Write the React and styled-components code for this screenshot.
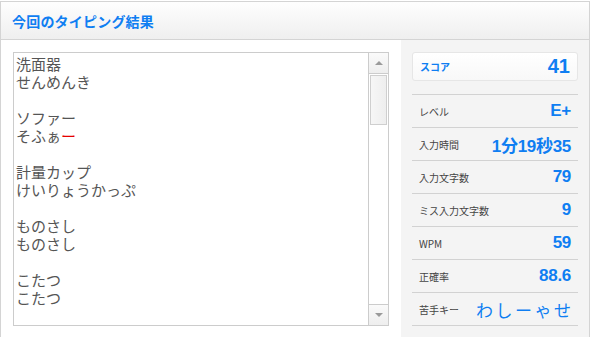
import React from "react"
import styled, { createGlobalStyle } from "styled-components"

const JP = `"Noto Sans CJK JP", "Liberation Sans", sans-serif`
const NUM = `"Liberation Sans", "Noto Sans CJK JP", sans-serif`
const BLUE = "#0f7ef2"

const stats = [
    { label: "レベル", value: "E+" },
    { label: "入力時間", value: "1分19秒35" },
    { label: "入力文字数", value: "79" },
    { label: "ミス入力文字数", value: "9" },
    { label: "WPM", value: "59" },
    { label: "正確率", value: "88.6" },
]

export default function App() {
    const words = [
        ["洗面器", "せんめんき"],
        ["ソファー", <>そふぁ<Miss>ー</Miss></>],
        ["計量カップ", "けいりょうかっぷ"],
        ["ものさし", "ものさし"],
        ["こたつ", "こたつ"],
    ]

    return <>
        <GlobalStyle />
        <Panel>
            <Header>
                <Title>今回のタイピング結果</Title>
            </Header>
            <Body>
                <TextBox>
                    <TextContent>
                        {words.map((w, i) => (
                            <Word key={i}>
                                <Line>{w[0]}</Line>
                                <Line>{w[1]}</Line>
                            </Word>
                        ))}
                    </TextContent>
                    <ScrollBar>
                        <ScrollButton><Arrow $up /></ScrollButton>
                        <Track><Thumb /></Track>
                        <ScrollButton $bottom><Arrow /></ScrollButton>
                    </ScrollBar>
                </TextBox>
                <Side>
                    <ScoreBox>
                        <ScoreLabel>スコア</ScoreLabel>
                        <ScoreValue>41</ScoreValue>
                    </ScoreBox>
                    <StatList>
                        {stats.map(s => (
                            <StatRow key={s.label}>
                                <StatLabel>{s.label}</StatLabel>
                                <StatValue>{s.value}</StatValue>
                            </StatRow>
                        ))}
                        <StatRow>
                            <StatLabel>苦手キー</StatLabel>
                            <WeakKeys>わしーゃせ</WeakKeys>
                        </StatRow>
                    </StatList>
                </Side>
            </Body>
        </Panel>
    </>
}

const GlobalStyle = createGlobalStyle`
    body {
        margin: 0;
        background: #fff;
        font-family: ${JP};
        overflow: hidden;
    }
`

const Panel = styled.div`
    margin-top: 1px;
    width: 590px;
    height: 336px;
    box-sizing: border-box;
    border: 1px solid #d4d4d4;
    border-bottom: none;
    display: flex;
    flex-direction: column;
`

const Header = styled.div`
    height: 37px;
    flex-shrink: 0;
    border-bottom: 1px solid #d4d4d4;
    background: linear-gradient(#fefefe, #efefef);
    display: flex;
    align-items: center;
    padding-left: 11px;
`

const Title = styled.h1`
    margin: 0;
    font-size: 14px;
    font-weight: bold;
    color: ${BLUE};
    letter-spacing: 0.2px;
`

const Body = styled.div`
    display: flex;
    flex: 1;
    padding-left: 12px;
    gap: 12px;
`

const TextBox = styled.div`
    margin-top: 12px;
    width: 376px;
    height: 274px;
    box-sizing: border-box;
    border: 1px solid #cccccc;
    display: flex;
    background: #fff;
`

const TextContent = styled.div`
    flex: 1;
    padding: 2px 2px 0 2px;
    font-size: 15px;
    color: #555;
    overflow: hidden;
`

const Word = styled.div`
    margin-bottom: 18px;
`

const Line = styled.div`
    height: 18px;
    line-height: 18px;
    white-space: nowrap;
`

const Miss = styled.span`
    color: #e60000;
`

const ScrollBar = styled.div`
    width: 19px;
    border-left: 1px solid #cccccc;
    display: flex;
    flex-direction: column;
    background: #fff;
`

const ScrollButton = styled.div`
    height: 20px;
    display: flex;
    align-items: center;
    justify-content: center;
    background: linear-gradient(#fafafa, #eeeeee);
    border-${p => (p.$bottom ? "top" : "bottom")}: 1px solid #cccccc;
`

const Arrow = styled.div`
    width: 0;
    height: 0;
    border-left: 4px solid transparent;
    border-right: 4px solid transparent;
    ${p => (p.$up
        ? "border-bottom: 4px solid #9a9a9a;"
        : "border-top: 4px solid #9a9a9a;")}
`

const Track = styled.div`
    flex: 1;
    padding: 1px 1px 0 1px;
`

const Thumb = styled.div`
    height: 50px;
    box-sizing: border-box;
    border: 1px solid #cfcfcf;
    background: linear-gradient(to right, #f6f6f6, #eeeeee);
`

const Side = styled.div`
    flex: 1;
    background: #f4f4f4;
    padding: 12px 11px 0 11px;
`

const ScoreBox = styled.div`
    height: 29px;
    box-sizing: border-box;
    border: 1px solid #e6e6e6;
    border-radius: 3px;
    background: linear-gradient(#ffffff, #f8f8f8);
    display: flex;
    align-items: center;
    justify-content: space-between;
    padding: 0 7px 0 7px;
`

const ScoreLabel = styled.span`
    font-size: 10px;
    font-weight: bold;
    color: ${BLUE};
`

const ScoreValue = styled.span`
    font-family: ${NUM};
    font-size: 20px;
    font-weight: bold;
    color: ${BLUE};
`

const StatList = styled.div`
    margin-top: 13px;
    border-bottom: 1px solid #d2d2d2;
`

const StatRow = styled.div`
    height: 32px;
    border-top: 1px solid #d2d2d2;
    display: flex;
    align-items: center;
    justify-content: space-between;
    padding: 0 7px 0 7px;
`

const StatLabel = styled.span`
    font-size: 10px;
    color: #444;
`

const StatValue = styled.span`
    font-family: ${NUM};
    font-size: 17px;
    font-weight: bold;
    color: ${BLUE};
    letter-spacing: -0.3px;
`

const WeakKeys = styled.span`
    font-size: 17px;
    color: ${BLUE};
    letter-spacing: 2.5px;
    margin-right: -2.5px;
`
